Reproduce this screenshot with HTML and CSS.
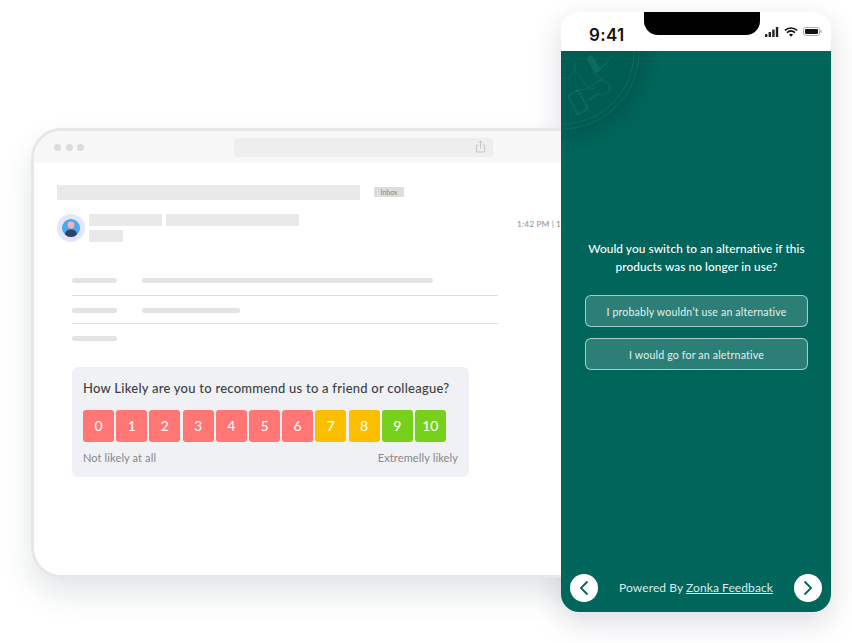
FILE: index.html
```html
<!DOCTYPE html>
<html lang="en">
<head>
<meta charset="UTF-8">
<meta name="viewport" content="width=device-width, initial-scale=1.0">
<title>Zonka Feedback</title>
<link rel="stylesheet" href="styles.css">
</head>
<body>
<div class="stage">
    <div class="window">
        <div class="window-bar">
            <div class="dots"><span></span><span></span><span></span></div>
            <div class="url-bar">
                <svg class="share" width="11" height="13" viewBox="0 0 12 14" fill="none" stroke="#c2c2c2" stroke-width="1">
                    <path d="M6 9V1M3.8 3L6 .9 8.2 3M3.5 5.5H1.5V13H10.5V5.5H8.5"/>
                </svg>
            </div>
        </div>
        <div class="mail">
            <div class="subject">
                <div class="bar subject-bar"></div>
                <span class="tag">Inbox</span>
            </div>
            <div class="sender">
                <svg class="avatar" width="28" height="28" viewBox="0 0 28 28">
                    <circle cx="14" cy="14" r="14" fill="#e3e7fa"/>
                    <circle cx="14" cy="14" r="9" fill="#48a9f2"/>
                    <circle cx="14" cy="11" r="3.4" fill="#fbb0b0"/>
                    <path d="M8.2 20.5C8.2 17 10.5 15.6 14 15.6S19.8 17 19.8 20.5C18.5 22.2 16.5 23 14 23S9.5 22.2 8.2 20.5Z" fill="#33416a"/>
                </svg>
                <div class="sender-lines">
                    <div class="sender-top">
                        <div class="bar name-bar"></div>
                        <div class="bar addr-bar"></div>
                    </div>
                    <div class="bar to-bar"></div>
                </div>
                <span class="time">1:42 PM | 1 Hour ago</span>
            </div>
            <div class="rows">
                <div class="row"><div class="line label-line"></div><div class="line long-line"></div></div>
                <div class="row"><div class="line label-line"></div><div class="line short-line"></div></div>
                <div class="row"><div class="line label-line"></div></div>
            </div>
            <div class="nps">
                <p class="nps-title">How Likely are you to recommend us to a friend or colleague?</p>
                <div class="scale">
                    <span class="score red">0</span>
                    <span class="score red">1</span>
                    <span class="score red">2</span>
                    <span class="score red">3</span>
                    <span class="score red">4</span>
                    <span class="score red">5</span>
                    <span class="score red">6</span>
                    <span class="score amber">7</span>
                    <span class="score amber">8</span>
                    <span class="score green">9</span>
                    <span class="score green">10</span>
                </div>
                <div class="scale-labels"><span>Not likely at all</span><span>Extremelly likely</span></div>
            </div>
        </div>
    </div>

    <div class="phone">
        <div class="status">
            <span class="clock">9:41</span>
            <div class="notch"></div>
            <div class="status-icons">
                <svg width="14" height="10" viewBox="0 0 14 10" fill="#222">
                    <rect x="0" y="7" width="2.4" height="3" rx=".5"/>
                    <rect x="3.6" y="5" width="2.4" height="5" rx=".5"/>
                    <rect x="7.2" y="2.6" width="2.4" height="7.4" rx=".5"/>
                    <rect x="10.8" y="0" width="2.4" height="10" rx=".5"/>
                </svg>
                <svg width="14" height="10" viewBox="0 0 14 10" fill="none" stroke="#111" stroke-width="1.7">
                    <path d="M.9 3.4C4.4.2 9.6.2 13.1 3.4M3 5.6C5.4 3.5 8.6 3.5 11 5.6"/>
                    <path d="M7 9.8L4.9 7.6C6.1 6.6 7.9 6.6 9.1 7.6Z" fill="#111" stroke="none"/>
                </svg>
                <svg width="19" height="9" viewBox="0 0 19 9">
                    <rect x=".5" y=".5" width="16" height="8" rx="2.2" fill="none" stroke="#aaa"/>
                    <rect x="2" y="2" width="13" height="5" rx="1" fill="#111"/>
                    <rect x="17.4" y="3" width="1.2" height="3" rx=".6" fill="#aaa"/>
                </svg>
            </div>
        </div>
        <div class="survey">
            <!-- viewBox is in page coordinates, the stamp sits in the corner and gets clipped -->
            <svg class="stamp" width="170" height="170" viewBox="477 -33 170 170" fill="none" stroke="#076e60" stroke-width="1">
                <circle cx="562" cy="52" r="77" fill="#005d53" stroke="#076e60"/>
                <circle cx="562" cy="52" r="72" stroke="#076e60"/>
                <path d="M562 60C570 54 576 60 575 68C574 76 566 80 562 78"/>
                <path d="M587 58L592 55L600 70L595 73Z" fill="#076e60"/>
                <path d="M596 72L608 62M600 70L612 56"/>
                <path d="M573 67L588 88L602 80L594 73"/>
                <path d="M593 85C596 79 606 78 609 85C611 92 604 96 598 94L590 100"/>
                <path d="M568 96L578 90L588 108L578 115Z" stroke="#077363" stroke-dasharray="2 1" stroke-width="2"/>
                <path d="M578 90L596 88M588 100L598 94"/>
            </svg>
            <div class="question">
                <p>Would you switch to an alternative if this products was no longer in use?</p>
                <button class="answer">I probably wouldn’t use an alternative</button>
                <button class="answer">I would go for an aletrnative</button>
            </div>
            <div class="survey-foot">
                <span class="nav">
                    <svg width="12" height="16" viewBox="0 0 12 16" fill="none" stroke="#00665c" stroke-width="1.8"><path d="M9.5 1.5L3 8l6.5 6.5"/></svg>
                </span>
                <span class="powered">Powered By <a href="#">Zonka Feedback</a></span>
                <span class="nav">
                    <svg width="12" height="16" viewBox="0 0 12 16" fill="none" stroke="#00665c" stroke-width="1.8"><path d="M2.5 1.5L9 8l-6.5 6.5"/></svg>
                </span>
            </div>
        </div>
    </div>
</div>
</body>
</html>
```

FILE: styles.css
```css
* {
    box-sizing: border-box;
}

body {
    margin: 0;
    background-color: white;
    font-family: Lato, "Liberation Sans", sans-serif;
}

.stage {
    position: relative;
    width: 852px;
    height: 643px;
    overflow: hidden;
}

/* browser window */
.window {
    position: absolute;
    left: 31px;
    top: 128px;
    width: 570px;
    height: 450px;
    background-color: white;
    border: 3px solid #e8e7e7;
    border-radius: 30px;
    overflow: hidden;
}

.stage::before {
    content: "";
    position: absolute;
    left: 31px;
    top: 128px;
    width: 570px;
    height: 450px;
    border-radius: 30px;
    box-shadow: 0 16px 30px rgba(40, 60, 80, 0.13);
}

.window-bar {
    display: flex;
    align-items: center;
    height: 32px;
    padding-left: 20px;
    background-color: #f7f7f7;
}

.dots {
    display: flex;
    gap: 4.5px;
    width: 180px;
}

.dots span {
    width: 7px;
    height: 7px;
    border-radius: 50%;
    background-color: #dcdcdc;
}

.url-bar {
    display: flex;
    align-items: center;
    justify-content: flex-end;
    width: 259px;
    height: 19px;
    padding-right: 7px;
    border-radius: 3px;
    background-color: #eeeeee;
}

.share {
    margin-bottom: 2px;
}

.mail {
    padding: 22px 0 0 23px;
}

.bar {
    background-color: #e9e9e9;
}

.subject {
    display: flex;
    align-items: center;
    gap: 14px;
}

.subject-bar {
    width: 303px;
    height: 15px;
}

.tag {
    width: 30px;
    height: 10px;
    margin-top: -1px;
    border-radius: 1px;
    background-color: #dddddd;
    color: #888888;
    font-size: 7px;
    line-height: 10px;
    text-align: center;
}

.sender {
    display: flex;
    align-items: flex-start;
    margin-top: 14px;
}

.avatar {
    flex-shrink: 0;
}

.sender-lines {
    margin-left: 4px;
    width: 432px;
}

.sender-top {
    display: flex;
    gap: 4px;
    margin-bottom: 4px;
}

.name-bar {
    width: 73px;
    height: 12px;
}

.addr-bar {
    width: 133px;
    height: 12px;
}

.to-bar {
    width: 34px;
    height: 12px;
}

.time {
    white-space: nowrap;
    color: #8f8f8f;
    font-size: 8.4px;
    line-height: 21px;
    letter-spacing: 0.1px;
}

.rows {
    width: 426px;
    margin: 26px 0 0 15px;
}

.row {
    display: flex;
    gap: 25px;
    height: 28px;
    padding-top: 12px;
    border-bottom: 1px solid #dedede;
}

.row:first-child {
    padding-top: 10px;
}

.row:last-child {
    border-bottom: none;
}

.line {
    height: 5px;
    border-radius: 3px;
    background-color: #e3e3e3;
}

.label-line {
    width: 45px;
}

.long-line {
    width: 291px;
}

.short-line {
    width: 98px;
}

/* nps card */
.nps {
    width: 397px;
    height: 110px;
    margin: 15px 0 0 15px;
    padding: 12px 11px 0;
    border-radius: 6px;
    background-color: #f0f1f5;
}

.nps-title {
    margin: 0;
    color: #3c3f44;
    font-size: 13px;
    font-weight: 500;
    line-height: 18px;
    letter-spacing: 0.25px;
    white-space: nowrap;
}

.scale {
    display: flex;
    gap: 2.2px;
    margin-top: 13px;
}

.score {
    width: 31px;
    height: 32px;
    border-radius: 3px;
    color: white;
    font-size: 14px;
    line-height: 32px;
    text-align: center;
}

.red {
    background-color: #ff7675;
}

.amber {
    background-color: #fcbf00;
}

.green {
    background-color: #77d01c;
}

.scale-labels {
    display: flex;
    justify-content: space-between;
    margin-top: 8px;
    color: #85878c;
    font-size: 11px;
    line-height: 15px;
    letter-spacing: 0.12px;
}

/* phone */
.phone {
    position: absolute;
    left: 561px;
    top: 12px;
    display: flex;
    flex-direction: column;
    width: 270px;
    height: 600px;
    border-radius: 18px;
    background-color: white;
    overflow: hidden;
}

.stage::after {
    content: "";
    position: absolute;
    left: 561px;
    top: 12px;
    width: 270px;
    height: 600px;
    border-radius: 18px;
    box-shadow: 0 10px 30px rgba(40, 40, 80, 0.16);
    z-index: -1;
}

.status {
    display: flex;
    justify-content: space-between;
    flex-shrink: 0;
    height: 39px;
    padding-left: 28px;
    padding-right: 9px;
}

.clock {
    padding-top: 14px;
    color: #111111;
    font-family: Inter, sans-serif;
    font-size: 17px;
    font-weight: 600;
    line-height: 18px;
    letter-spacing: 0.3px;
}

.notch {
    width: 116px;
    height: 23px;
    margin-left: 15px;
    border-radius: 0 0 14px 14px;
    background-color: black;
}

.status-icons {
    display: flex;
    align-items: center;
    gap: 5px;
    height: 39px;
}

.survey {
    position: relative;
    display: flex;
    flex-direction: column;
    flex: 1;
    padding: 0 23px 10px 9px;
    background-color: #00665c;
    overflow: hidden;
}

.stamp {
    position: absolute;
    left: -84px;
    top: -84px;
    filter: drop-shadow(6px 6px 12px rgba(0, 50, 45, 0.3));
}

.question {
    position: relative;
    width: 223px;
    margin: 189px 0 0 15px;
    flex: 1;
}

.question p {
    width: 236px;
    margin: 0 0 19px -6.5px;
    color: white;
    font-size: 11.8px;
    font-weight: 500;
    line-height: 18px;
    letter-spacing: 0.1px;
    text-align: center;
}

.answer {
    display: block;
    width: 223px;
    height: 32px;
    margin-bottom: 11px;
    padding-top: 2px;
    border: 1px solid rgba(255, 255, 255, 0.6);
    border-radius: 6px;
    background-color: rgba(255, 255, 255, 0.17);
    color: #e4f0ee;
    font-family: inherit;
    font-size: 10.6px;
    letter-spacing: 0.17px;
}

.survey-foot {
    display: flex;
    align-items: center;
    justify-content: space-between;
    position: relative;
    width: 252px;
}

.nav {
    display: flex;
    align-items: center;
    justify-content: center;
    width: 28px;
    height: 28px;
    border-radius: 50%;
    background-color: white;
}

.powered {
    padding-bottom: 2px;
    color: #dcebe9;
    font-size: 12px;
    letter-spacing: 0.08px;
}

.powered a {
    color: inherit;
}
```
